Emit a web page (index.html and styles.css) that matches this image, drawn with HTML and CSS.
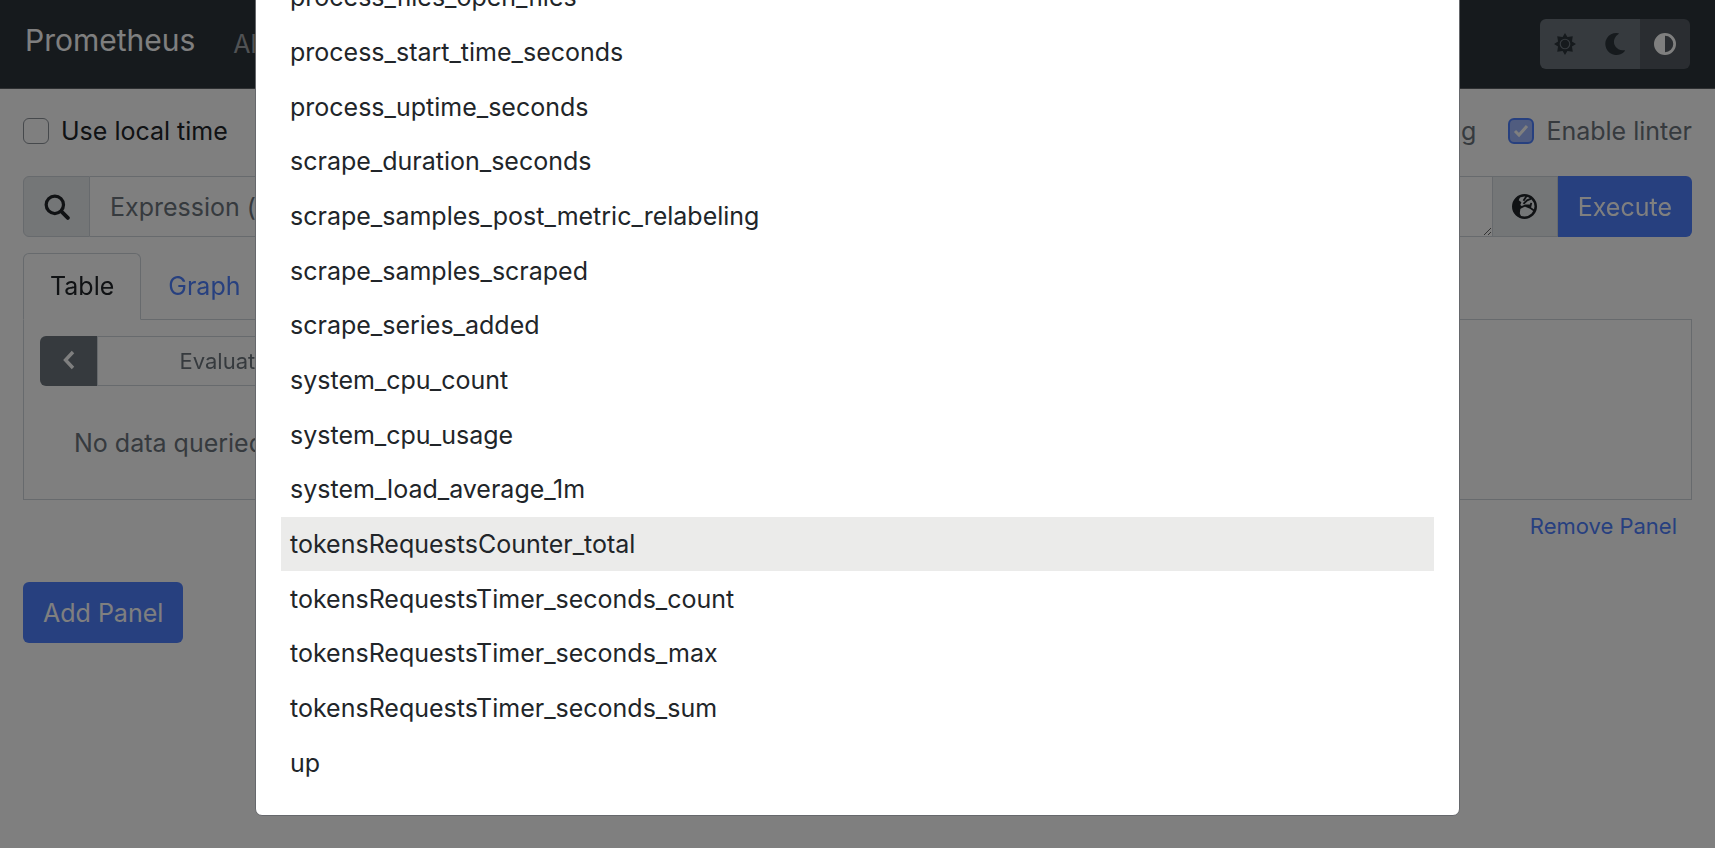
FILE: index.html
```html
<!DOCTYPE html>
<html lang="en">
<head>
<meta charset="utf-8">
<title>Prometheus</title>
<link rel="stylesheet" href="styles.css">
</head>
<body>
<header class="navbar">
  <a class="brand" href="#">Prometheus</a>
  <nav class="nav"><a href="#">Alerts</a></nav>
  <div class="themes">
    <button class="theme" type="button" aria-label="Light theme">
      <svg class="icon" viewBox="0 0 24 24"><path fill="currentColor" d="M12 0l2.600 4.400 5.900-.9-.9 5.900L24 12l-4.400 2.600.9 5.900-5.900-.9L12 24l-2.600-4.400-5.900.9.9-5.900L0 12l4.400-2.600-.9-5.900 5.900.9z"/><circle cx="12" cy="12" r="5.200" fill="currentColor" stroke="#6c757d" stroke-width="1.300"/></svg>
    </button>
    <button class="theme" type="button" aria-label="Dark theme">
      <svg class="icon" viewBox="0 0 24 24"><path fill="currentColor" d="M13.500 0a12 12 0 1 0 9.300 19.500c.3-.4 0-.9-.5-.8A9.400 9.400 0 0 1 15.900 1.200c.5-.3.4-.9-.1-1z"/></svg>
    </button>
    <button class="theme theme-active" type="button" aria-label="Browser theme">
      <svg class="icon" viewBox="0 0 24 24"><path fill="currentColor" fill-rule="evenodd" d="M12 0a12 12 0 1 0 0 24 12 12 0 0 0 0-24zm0 3a9 9 0 0 1 0 18z"/></svg>
    </button>
  </div>
</header>
<main class="page">
  <div class="options">
    <label class="check check-dark"><input type="checkbox">Use local time</label>
    <label class="check push"><input type="checkbox" checked>Enable highlighting</label>
    <label class="check"><input type="checkbox" checked>Enable linter</label>
  </div>
  <form class="query">
    <span class="addon"><svg class="search" viewBox="0 0 24 24" fill="none" stroke="currentColor"><circle cx="10" cy="10" r="8" stroke-width="3"/><path d="M16 16l6 6" stroke-width="3.600" stroke-linecap="round"/></svg></span>
    <textarea class="expression" rows="1" aria-label="Expression" placeholder="Expression (press Shift+Enter for newlines)"></textarea>
    <button class="addon addon-button" type="button" aria-label="Open metrics explorer">
      <svg class="globe" viewBox="0 0 24 24"><circle cx="12" cy="12" r="10.800" fill="none" stroke="currentColor" stroke-width="2.400"/><path fill="currentColor" d="M8 2L4 4 1 9v7l4 5 4 1.500-1.500-4 .5-4 2.500-2L8 10.500 9 8 6.500 6z"/><path fill="none" stroke="currentColor" stroke-width="1.800" d="M14 2l-3 4.500M18.500 4.500l-4 1.500-3.500 3.500M8 13l5-2h5.500M18.500 8.500l-1 4M13 11.500l4 1.500 4.500 3"/></svg>
    </button>
    <button class="button execute" type="button">Execute</button>
  </form>
  <nav class="tabs">
    <a class="tab tab-active" href="#">Table</a>
    <a class="tab" href="#">Graph</a>
  </nav>
  <section class="panel">
    <div class="time">
      <button class="step" type="button" aria-label="Earlier"><svg class="chevron" viewBox="0 0 12 20"><path d="M10 2L2.500 10l7.500 8" fill="none" stroke="currentColor" stroke-width="3.400"/></svg></button>
      <input class="time-input" type="text" aria-label="Evaluation time" placeholder="Evaluation time">
    </div>
    <p class="empty">No data queried yet</p>
  </section>
  <div class="remove"><a href="#">Remove Panel</a></div>
  <button class="button" type="button">Add Panel</button>
</main>
<div class="backdrop">
  <div class="modal" role="dialog" aria-label="Metrics Explorer">
    <ul class="metrics">
      <li>process_files_open_files</li>
      <li>process_start_time_seconds</li>
      <li>process_uptime_seconds</li>
      <li>scrape_duration_seconds</li>
      <li>scrape_samples_post_metric_relabeling</li>
      <li>scrape_samples_scraped</li>
      <li>scrape_series_added</li>
      <li>system_cpu_count</li>
      <li>system_cpu_usage</li>
      <li>system_load_average_1m</li>
      <li class="hovered">tokensRequestsCounter_total</li>
      <li>tokensRequestsTimer_seconds_count</li>
      <li>tokensRequestsTimer_seconds_max</li>
      <li>tokensRequestsTimer_seconds_sum</li>
      <li>up</li>
    </ul>
  </div>
</div>
</body>
</html>
```
FILE: styles.css
```css
* { box-sizing: border-box; }

body {
  margin: 0;
  min-height: 100vh;
  overflow: hidden;
  background: #fff;
  color: #212529;
  font: 25px/36px Inter, "Liberation Sans", sans-serif;
}

a { color: #4e80ff; text-decoration: none; }

button, input, textarea { font: inherit; color: inherit; margin: 0; }

.navbar {
  display: flex;
  align-items: center;
  height: 89px;
  padding: 0 25px;
  background: #2c343a;
  border-bottom: 1px solid #5c6064;
}

.brand { color: #fff; font-size: 30px; padding-bottom: 8px; }

.nav { flex: 1; padding-left: 38px; }
.nav a { color: #a0a4a8; }

.themes { display: flex; }

.theme {
  display: flex;
  align-items: center;
  justify-content: center;
  width: 50px;
  height: 50px;
  padding: 0;
  border: 0;
  background: #6c757d;
  color: #2c343a;
}

.theme:first-child { border-radius: 6px 0 0 6px; }
.theme-active { border-radius: 0 6px 6px 0; background: #545b62; color: #fff; }

.icon { width: 22px; height: 22px; }

.page { padding: 24px 23px; }

.options { display: flex; gap: 32px; height: 36px; }

.check { display: flex; align-items: center; gap: 12px; color: #6c757d; }
.check-dark { color: #212529; }
.push { margin-left: auto; }

.check input {
  appearance: none;
  width: 26px;
  height: 26px;
  border: 1px solid #8c9299;
  border-radius: 6px;
}

.check input:checked {
  border: 2px solid #4e80ff;
  background: #a0b8ff url("data:image/svg+xml,%3Csvg xmlns='http://www.w3.org/2000/svg' viewBox='0 0 22 22'%3E%3Cpath d='M5 11l4 4 8-9' fill='none' stroke='white' stroke-width='3'/%3E%3C/svg%3E");
}

.query { display: flex; height: 61px; margin-top: 27px; }

.addon {
  display: flex;
  align-items: center;
  justify-content: center;
  width: 67px;
  border: 1px solid #ced4da;
  border-radius: 6px 0 0 6px;
  background: #e9ecef;
}

.addon-button { width: 66px; border-radius: 0; padding: 0; }

.search { width: 26px; height: 26px; }
.globe { width: 25px; height: 25px; }

.expression {
  flex: 1;
  height: 61px;
  padding: 12px 20px;
  border: 1px solid #ced4da;
  border-width: 1px 0;
  border-radius: 0;
  background: #fff;
}

.expression::placeholder, .time-input::placeholder { color: #6c757d; opacity: 1; }

.button {
  height: 61px;
  padding: 0 20px;
  border: 0;
  border-radius: 6px;
  background: #4e80ff;
  color: #fff;
}

.execute { border-radius: 0 6px 6px 0; }

.tabs { display: flex; margin-top: 16px; }

.tab { padding: 14px 26px; border: 1px solid transparent; }

.tab-active {
  margin-bottom: -1px;
  border-color: #ced4da;
  border-bottom-color: #fff;
  border-radius: 6px 6px 0 0;
  background: #fff;
  color: #212529;
}

.panel { padding: 16px; border: 1px solid #ced4da; }

.time { display: flex; width: 380px; height: 50px; }

.step {
  width: 57px;
  padding: 0;
  border: 0;
  border-radius: 6px 0 0 6px;
  background: #6c757d;
  color: #fff;
}

.chevron { width: 12px; height: 20px; }

.time-input {
  flex: 1;
  min-width: 0;
  border: 1px solid #ced4da;
  background: #fff;
  font-size: 22px;
  text-align: center;
}

.empty { margin: 39px 34px 22px; color: #6c757d; }

.remove { padding: 8px 15px 38px; text-align: right; font-size: 22px; }

.backdrop {
  position: fixed;
  inset: 0;
  display: flex;
  align-items: flex-end;
  justify-content: center;
  padding-bottom: 32px;
  overflow: hidden;
  background: rgba(0, 0, 0, 0.5);
}

.modal {
  width: 100%;
  max-width: 1205px;
  padding: 25px;
  border: 1px solid #66686c;
  border-radius: 7px;
  background: #fff;
}

.metrics {
  display: grid;
  grid-auto-rows: 1fr;
  height: 820px;
  margin: 0;
  padding: 0;
  list-style: none;
}

.metrics li { display: flex; align-items: center; padding: 0 9px; }
.hovered { background: #ebebea; }
```
